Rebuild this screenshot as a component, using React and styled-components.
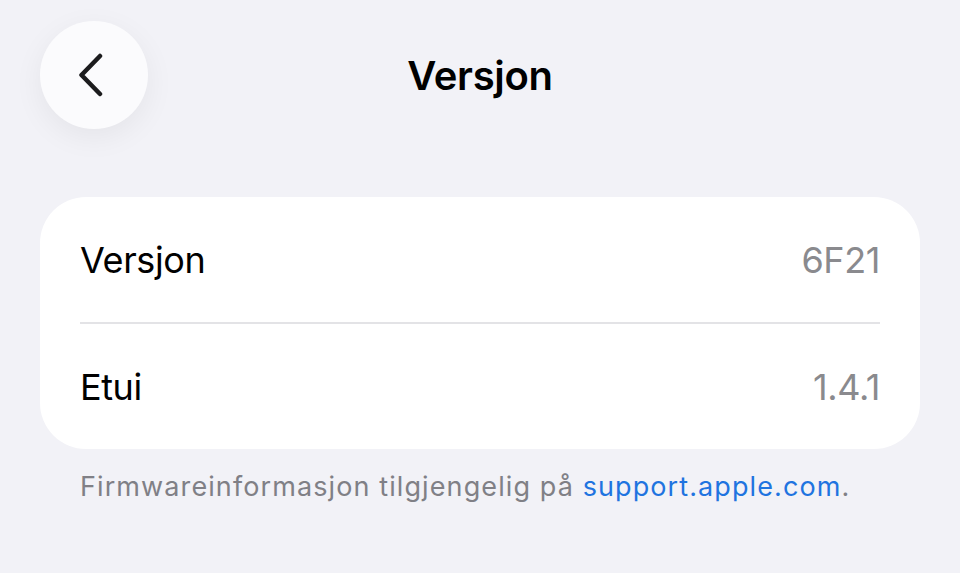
import React from 'react';
import styled, { createGlobalStyle } from 'styled-components';

const GlobalStyle = createGlobalStyle`
  html, body {
    margin: 0;
    padding: 0;
    background: #f2f2f7;
    font-family: Inter, "Noto Sans", sans-serif;
    -webkit-font-smoothing: antialiased;
  }
`;

const Page = styled.div`
  width: 960px;
  height: 573px;
  box-sizing: border-box;
  padding: 21px 40px 0;
  background: #f2f2f7;
  overflow: hidden;
`;

const Header = styled.header`
  display: grid;
  grid-template-columns: 108px 1fr 108px;
  align-items: center;
  height: 108px;
`;

const BackButton = styled.button`
  width: 108px;
  height: 108px;
  border: none;
  border-radius: 50%;
  background: #fbfbfd;
  box-shadow: 0 8px 30px rgba(0, 0, 0, 0.06);
  display: flex;
  align-items: center;
  justify-content: center;
  padding: 0 6px 0 0;
  cursor: pointer;
`;

const Title = styled.h1`
  margin: 0;
  text-align: center;
  font-size: 40px;
  font-weight: 600;
  color: #000;
  letter-spacing: -0.3px;
`;

const Card = styled.section`
  margin-top: 68px;
  background: #fff;
  border-radius: 46px;
  padding: 0 40px;
`;

const Row = styled.div`
  display: flex;
  justify-content: space-between;
  align-items: center;
  height: 125px;
  font-size: 36px;
  letter-spacing: -0.4px;
  border-top: ${(p) => (p.$first ? 'none' : '2px solid #e3e3e6')};
`;

const Label = styled.span`
  color: #000;
`;

const Value = styled.span`
  color: #8a8a8e;
`;

const Footnote = styled.p`
  margin: 21px 0 0 40px;
  font-size: 27px;
  letter-spacing: 1.1px;
  color: #808086;
`;

const Link = styled.a`
  color: #1f74e0;
  text-decoration: none;
`;

const rows = [
  { label: 'Versjon', value: '6F21' },
  { label: 'Etui', value: '1.4.1' },
];

export default function App() {
  return (
    <>
      <GlobalStyle />
      <Page>
        <Header>
          <BackButton aria-label="Tilbake">
            <svg width="28" height="44" viewBox="0 0 28 44" fill="none">
              <path
                d="M23 3 L4.5 22 L23 41"
                stroke="#1c1c1e"
                strokeWidth="4.5"
                strokeLinecap="round"
                strokeLinejoin="round"
              />
            </svg>
          </BackButton>
          <Title>Versjon</Title>
          <div />
        </Header>
        <Card>
          {rows.map((r, i) => (
            <Row key={r.label} $first={i === 0}>
              <Label>{r.label}</Label>
              <Value>{r.value}</Value>
            </Row>
          ))}
        </Card>
        <Footnote>
          Firmwareinformasjon tilgjengelig på <Link href="#">support.apple.com</Link>.
        </Footnote>
      </Page>
    </>
  );
}
